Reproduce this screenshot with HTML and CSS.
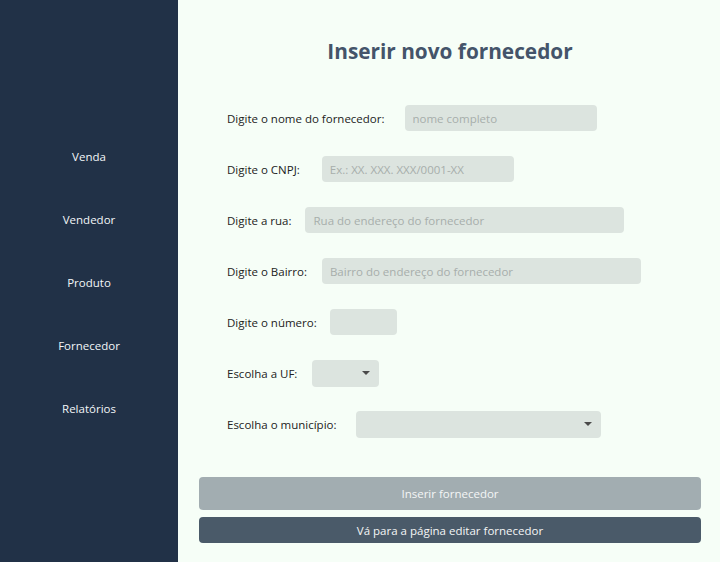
FILE: index.html
```html
<!DOCTYPE html>
<html lang="pt-BR">
<head>
<meta charset="utf-8">
<title>Inserir novo fornecedor</title>
<link rel="stylesheet" href="styles.css">
</head>
<body>
<div class="app">
  <nav class="sidebar">
    <a class="nav-item" href="#">Venda</a>
    <a class="nav-item" href="#">Vendedor</a>
    <a class="nav-item" href="#">Produto</a>
    <a class="nav-item" href="#">Fornecedor</a>
    <a class="nav-item" href="#">Relatórios</a>
  </nav>
  <main class="main">
    <h1 class="title">Inserir novo fornecedor</h1>
    <form class="form">
      <div class="row"><label class="lbl lbl-nome">Digite o nome do fornecedor:</label><input class="field w-nome" placeholder="nome completo"></div>
      <div class="row"><label class="lbl lbl-cnpj">Digite o CNPJ:</label><input class="field w-nome" placeholder="Ex.: XX. XXX. XXX/0001-XX"></div>
      <div class="row"><label class="lbl lbl-rua">Digite a rua:</label><input class="field w-long" placeholder="Rua do endereço do fornecedor"></div>
      <div class="row"><label class="lbl lbl-bairro">Digite o Bairro:</label><input class="field w-long" placeholder="Bairro do endereço do fornecedor"></div>
      <div class="row"><label class="lbl lbl-num">Digite o número:</label><input class="field w-short"></div>
      <div class="row"><label class="lbl lbl-uf">Escolha a UF:</label><div class="select w-short"><span class="caret"></span></div></div>
      <div class="row"><label class="lbl lbl-mun">Escolha o município:</label><div class="select w-mun"><span class="caret"></span></div></div>
    </form>
    <div class="actions">
      <button class="btn btn-insert" type="button">Inserir fornecedor</button>
      <button class="btn btn-edit" type="button">Vá para a página editar fornecedor</button>
    </div>
  </main>
</div>
</body>
</html>
```
FILE: styles.css
```css
* { box-sizing: border-box; }
html, body { margin: 0; padding: 0; }
body {
  font-family: "Open Sans", "Noto Sans", sans-serif;
  font-size: 11.5px;
  background: #f6fef7;
  color: #222;
}
.app { display: flex; width: 720px; height: 562px; }
.sidebar {
  width: 178px;
  flex: none;
  background: #213147;
  display: flex;
  flex-direction: column;
  align-items: center;
  padding-top: 148px;
  gap: 46px;
}
.nav-item {
  color: #f2f6f8;
  text-decoration: none;
  font-size: 11.5px;
  line-height: 17px;
}
.main {
  flex: 1;
  display: flex;
  flex-direction: column;
  padding: 0 19px 0 21px;
}
.title {
  margin: 36px 0 0;
  text-align: center;
  font-size: 20.8px;
  line-height: 30px;
  font-weight: 700;
  color: #44546a;
}
.form {
  display: flex;
  flex-direction: column;
  gap: 25px;
  padding-left: 28px;
  margin-top: 39px;
}
.row { display: flex; align-items: center; height: 26px; }
.lbl { color: #222; white-space: nowrap; }
.lbl-nome { margin-right: 20px; }
.lbl-cnpj { margin-right: 22px; }
.lbl-rua { margin-right: 14px; }
.lbl-bairro { margin-right: 15px; }
.lbl-num { margin-right: 13px; }
.lbl-uf { margin-right: 15px; }
.lbl-mun { margin-right: 20px; }
.field, .select {
  height: 26px;
  border: none;
  border-radius: 4px;
  background: #dce4df;
  font-family: inherit;
  font-size: 11.5px;
  color: #333;
  padding: 0 8px;
  outline: none;
}
.field::placeholder { color: #a7aeab; }
.w-nome { width: 192px; }
.w-long { width: 319px; }
.w-short { width: 67px; }
.w-mun { width: 245px; }
.select {
  height: 27px;
  display: flex;
  align-items: center;
  justify-content: flex-end;
  padding-right: 9px;
}
.caret {
  width: 0; height: 0;
  border-left: 4px solid transparent;
  border-right: 4px solid transparent;
  border-top: 4px solid #4a4a4a;
}
.actions {
  margin-top: 40px;
  display: flex;
  flex-direction: column;
  gap: 7px;
}
.btn {
  border: none;
  border-radius: 4px;
  font-family: inherit;
  font-size: 11.5px;
  color: #f4f6f6;
  width: 100%;
}
.btn-insert { height: 33px; background: #a2adb1; }
.btn-edit { height: 26px; background: #4a5a69; }
```
